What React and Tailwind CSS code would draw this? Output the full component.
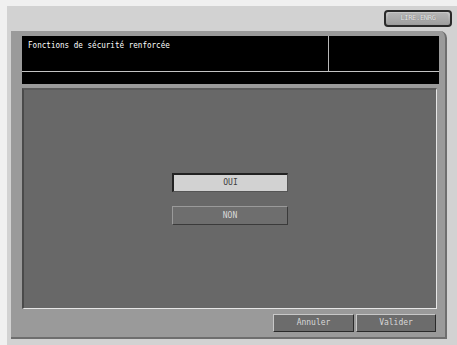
export default function App() {
  const mono = { fontFamily: '"DejaVu Sans Mono", "Liberation Mono", monospace' };
  return (
    <div className="w-[457px] h-[345px] bg-[#f0f0f0] pt-[6px] pl-[7px] overflow-hidden" style={mono}>
      <div className="w-[450px] h-[339px] bg-[#d2d2d2] flex flex-col">
        <div className="h-[25px] flex justify-end items-start pt-[4px] pr-[5px]">
          <div className="w-[68px] h-[17px] rounded-[4px] border-[2px] border-[#2a2a2a] bg-gradient-to-b from-[#c8c8c8] to-[#9a9a9a] flex items-center justify-center">
            <div className="w-[60px] h-[11px] rounded-[2px] bg-gradient-to-b from-[#b4b4b4] to-[#a0a0a0] flex items-center justify-center text-[7px] leading-none text-[#e8e8e8] tracking-[-0.3px]" style={{ textShadow: '0 0 1px #666' }}>
              LIRE.ENRG
            </div>
          </div>
        </div>
        <div className="ml-[4px] w-[436px] h-[308px] bg-[#9a9a9a] rounded-tr-[7px] border-r-[2px] border-b-[2px] border-[#6e6e6e] pl-[11px] pt-[5px] pr-[6px] flex flex-col">
          <div className="w-[417px] h-[35px] bg-black flex">
            <div className="w-[306px] h-full text-white pl-[6px] pt-[4px] flex items-start">
              <span className="block text-[9.5px] leading-none whitespace-nowrap origin-left scale-x-[0.8]">
                Fonctions de sécurité renforcée
              </span>
            </div>
            <div className="w-[1px] h-full bg-[#b8b8b8]" />
            <div className="flex-1" />
          </div>
          <div className="w-[417px] h-[1px] bg-[#c4c4c4]" />
          <div className="w-[417px] h-[12px] bg-black" />
          <div className="h-[4px]" />
          <div className="w-[415px] h-[221px] bg-[#686868] border-l-[2px] border-t-[2px] border-l-[#4a4a4a] border-t-[#5a5a5a] border-r-[1px] border-b-[1px] border-r-[#e6e6e6] border-b-[#e6e6e6] flex flex-col items-center pt-[83px] gap-[14px]">
            <div className="w-[116px] h-[19px] bg-[#d2d2d2] border-l-[2px] border-t-[2px] border-[#222] border-r-[1px] border-b-[1px] border-r-[#555] border-b-[#555] flex items-center justify-center text-[8px] leading-none text-[#404040]">
              OUI
            </div>
            <div className="w-[116px] h-[19px] bg-[#6e6e6e] border-l-[1px] border-t-[1px] border-[#9a9a9a] border-r-[1px] border-b-[1px] border-r-[#3a3a3a] border-b-[#3a3a3a] flex items-center justify-center text-[8px] leading-none text-[#d8d8d8]">
              NON
            </div>
          </div>
          <div className="flex justify-end gap-[2px] pt-[5px] pr-[3px]">
            <div className="w-[81px] h-[18px] bg-[#6c6c6c] border-l-[1px] border-t-[1px] border-[#c8c8c8] border-r-[1px] border-b-[1px] border-r-[#2a2a2a] border-b-[#2a2a2a] flex items-center justify-center text-[8px] leading-none text-[#d8d8d8]">
              Annuler
            </div>
            <div className="w-[80px] h-[18px] bg-[#6c6c6c] border-l-[1px] border-t-[1px] border-[#c8c8c8] border-r-[1px] border-b-[1px] border-r-[#2a2a2a] border-b-[#2a2a2a] flex items-center justify-center text-[8px] leading-none text-[#d8d8d8]">
              Valider
            </div>
          </div>
        </div>
      </div>
    </div>
  );
}
